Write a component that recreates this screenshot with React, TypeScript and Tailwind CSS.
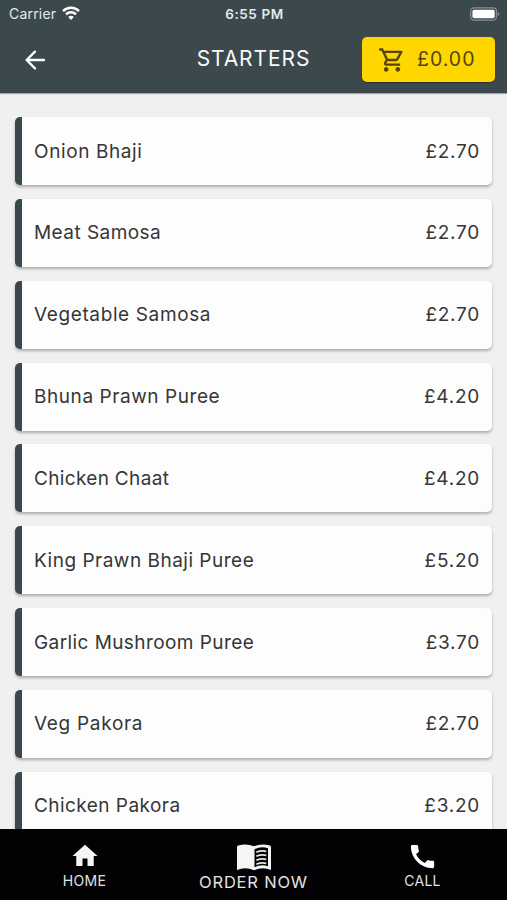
import { MdCall, MdHome, MdOutlineShoppingCart } from 'react-icons/md';

interface MenuItem {
  name: string;
  price: string;
  tracking: string;
}

const items: MenuItem[] = [
  { name: 'Onion Bhaji', price: '£2.70', tracking: 'tracking-[0.6px]' },
  { name: 'Meat Samosa', price: '£2.70', tracking: 'tracking-[0.45px]' },
  { name: 'Vegetable Samosa', price: '£2.70', tracking: 'tracking-[0.62px]' },
  { name: 'Bhuna Prawn Puree', price: '£4.20', tracking: 'tracking-[0.57px]' },
  { name: 'Chicken Chaat', price: '£4.20', tracking: 'tracking-[0.33px]' },
  { name: 'King Prawn Bhaji Puree', price: '£5.20', tracking: 'tracking-[0.5px]' },
  { name: 'Garlic Mushroom Puree', price: '£3.70', tracking: 'tracking-[0.42px]' },
  { name: 'Veg Pakora', price: '£2.70', tracking: 'tracking-[0.7px]' },
  { name: 'Chicken Pakora', price: '£3.20', tracking: 'tracking-[0.45px]' },
];

function StatusBar() {
  return (
    <div className="grid h-7 grid-cols-3 items-center pr-[7px] pl-[9px] text-[14px] text-[#e3eaea]">
      <div className="-mt-[2px] flex items-center gap-1.5">
        <span className="tracking-[0.2px]">Carrier</span>
        <svg className="h-[14px] w-[18px]" viewBox="0 0 18 14" fill="none" stroke="#fff" strokeWidth="2.4">
          <path d="M1 5.1a11.4 11.4 0 0 1 16 0" />
          <path d="M4 8.3a7.1 7.1 0 0 1 10 0" />
          <path d="M9 14 6.2 11.1a4 4 0 0 1 5.6 0Z" fill="#fff" stroke="none" />
        </svg>
      </div>
      <span className="text-center text-[13.5px] font-semibold tracking-[0.6px]">6:55 PM</span>
      <svg className="-mt-px h-[14px] w-[30px] justify-self-end" viewBox="0 0 31 14">
        <rect x="0.7" y="0.7" width="26.6" height="12.6" rx="3.5" fill="none" stroke="#869192" strokeWidth="1.3" />
        <rect x="2.5" y="2.5" width="23" height="9" rx="1.8" fill="#fff" />
        <path d="M28.7 4.7v4.6q1.5-.8 1.5-2.3t-1.5-2.3" fill="#869192" />
      </svg>
    </div>
  );
}

function Header() {
  return (
    <header className="relative z-10 h-[93px] shrink-0 bg-[#3b494c] shadow-[0_1px_1px_rgba(0,0,0,0.3)]">
      <StatusBar />
      <div className="grid grid-cols-[1fr_auto_1fr] items-center pt-[9px] pr-[12px] pl-[12px]">
        <svg className="ml-[9px] h-[26px] w-[26px]" viewBox="0 0 26 26" fill="none" stroke="#fff" strokeWidth="2.3" strokeLinecap="round" strokeLinejoin="round">
          <path d="M23 13H5.6M14 4.6 5.6 13l8.4 8.4" />
        </svg>
        <h1 className="-mt-[2px] text-[21px] leading-7 tracking-[0.9px] text-[#fbf7fa]">STARTERS</h1>
        <button className="flex h-[45px] w-[133px] items-center justify-self-end rounded-[5px] bg-[#ffd600] pl-[16px] text-[#51460f] shadow-[0_1px_1px_rgba(0,0,0,0.3)]">
          <MdOutlineShoppingCart className="h-7 w-7" />
          <span className="ml-[11px] text-[19.5px] tracking-[1px]">£0.00</span>
        </button>
      </div>
    </header>
  );
}

function ItemCard({ item }: { item: MenuItem }) {
  return (
    <li className="flex h-[68px] shrink-0 items-center justify-between rounded-[5px] border-l-[7px] border-[#3b494c] bg-[#fdfdfd] pt-[1.5px] pr-[12px] pl-[12px] text-[19px] text-[#363636] shadow-[0_2px_3px_rgba(0,0,0,0.28)]">
      <span className={item.tracking}>{item.name}</span>
      <span className="tracking-[0.75px]">{item.price}</span>
    </li>
  );
}

function MenuBookIcon() {
  return (
    <svg className="h-[27px] w-[34px]" viewBox="0 0 34 27" fill="none">
      <path d="M0 3.2Q0 2 1.2 1.6 9-1 17 2.3 25-1 32.800 1.600 34 2 34 3.200V26Q25.500 22.300 17 26.300 8.500 22.300 0 26Z" fill="#f5f5f5" />
      <path d="M17.500 5.200Q24 1.800 31 4.300V22.300Q24 19.800 17.500 23.300Z" fill="#020103" />
      <path d="M19.300 8.300q5-2.200 10-1M19.300 12.300q5-2.200 10-1M19.300 16.300q5-2.200 10-1M19.300 20.300q5-2.200 10-1" stroke="#e6e6e6" strokeWidth="1.7" />
    </svg>
  );
}

function BottomNav() {
  return (
    <nav className="relative z-10 grid h-[71px] shrink-0 grid-cols-3 bg-[#020103] text-[#e4e2e5]">
      <div className="flex flex-col items-center pt-[12px]">
        <MdHome className="h-[30px] w-[30px] text-[#f5f5f5]" />
        <span className="text-[14px] leading-5 tracking-[0.3px]">HOME</span>
      </div>
      <div className="flex flex-col items-center pt-[15px]">
        <MenuBookIcon />
        <span className="mt-px text-[16.5px] leading-5 tracking-[0.8px]">ORDER NOW</span>
      </div>
      <div className="flex flex-col items-center pt-[12px]">
        <MdCall className="h-[31px] w-[31px] text-[#fff]" />
        <span className="-mt-px text-[14px] leading-5 tracking-[0.3px]">CALL</span>
      </div>
    </nav>
  );
}

export default function App() {
  return (
    <div className="flex h-[900px] w-[507px] flex-col overflow-hidden bg-[#f0f0f1] font-['Inter',sans-serif]">
      <Header />
      <main className="min-h-0 flex-1 overflow-hidden">
        <ul className="flex flex-col gap-[13.85px] pt-[24px] pr-[15px] pl-[15px]">
          {items.map((item) => (
            <ItemCard key={item.name} item={item} />
          ))}
        </ul>
      </main>
      <BottomNav />
    </div>
  );
}
